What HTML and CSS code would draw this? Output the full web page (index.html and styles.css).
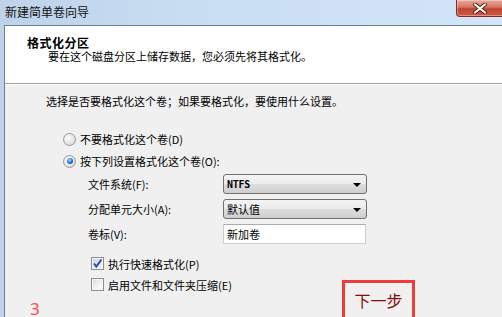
FILE: index.html
```html
<!DOCTYPE html>
<html lang="zh-CN">
<head>
<meta charset="utf-8">
<title>新建简单卷向导</title>
<link rel="stylesheet" href="styles.css">
</head>
<body>
<div class="window">
  <div class="titlebar">
    <span class="title">新建简单卷向导</span>
    <div class="close">
      <svg width="18" height="11" viewBox="0 0 18 11">
        <path d="M4 1.5 L14 9.5 M14 1.5 L4 9.5" stroke="#5a1a12" stroke-width="4" stroke-linecap="round"/>
        <path d="M4 1.5 L14 9.5 M14 1.5 L4 9.5" stroke="#ffffff" stroke-width="2.2" stroke-linecap="round"/>
      </svg>
    </div>
  </div>
  <div class="frame">
    <div class="client">
      <div class="header">
        <div class="h-title">格式化分区</div>
        <div class="h-sub">要在这个磁盘分区上储存数据，您必须先将其格式化。</div>
      </div>
      <div class="content">
        <div class="intro">选择是否要格式化这个卷；如果要格式化，要使用什么设置。</div>
        <div class="radio-row"><span class="radio"></span><span>不要格式化这个卷(D)</span></div>
        <div class="radio-row"><span class="radio checked"></span><span>按下列设置格式化这个卷(O):</span></div>
        <div class="form">
          <div class="f-row"><span class="f-label">文件系统(F):</span><div class="select"><span class="sel-text mono">NTFS</span><span class="arrow"></span></div></div>
          <div class="f-row"><span class="f-label">分配单元大小(A):</span><div class="select"><span class="sel-text">默认值</span><span class="arrow"></span></div></div>
          <div class="f-row"><span class="f-label">卷标(V):</span><div class="input">新加卷</div></div>
        </div>
        <div class="checks">
          <div class="check-row"><span class="check checked">
            <svg width="11" height="11" viewBox="0 0 11 11"><path d="M2 5.5 L4.3 8.5 L9.5 1.5" fill="none" stroke="#2b4fa8" stroke-width="2"/></svg>
          </span><span>执行快速格式化(P)</span></div>
          <div class="check-row"><span class="check"></span><span>启用文件和文件夹压缩(E)</span></div>
        </div>
        <div class="anno-num">3</div>
        <div class="anno-box">下一步</div>
      </div>
    </div>
  </div>
</div>
</body>
</html>
```
FILE: styles.css
```css
html, body {
  margin: 0;
  padding: 0;
  overflow: hidden;
}
body {
  width: 502px;
  height: 317px;
  font-family: "Noto Sans CJK SC", "Noto Sans", sans-serif;
  font-size: 11px;
  color: #000;
}
.window {
  width: 502px;
  height: 317px;
  display: flex;
  flex-direction: column;
  background: linear-gradient(to right, #bed2e9 0%, #c9ddf3 40%, #d3e5f8 100%);
}
.titlebar {
  height: 25px;
  display: flex;
  align-items: center;
  padding-left: 5px;
  flex-shrink: 0;
}
.title {
  font-size: 12px;
  line-height: 14px;
  margin-top: -1px;
  color: #111;
}
.close {
  margin-left: auto;
  align-self: flex-start;
  width: 48px;
  height: 16px;
  margin-right: -4px;
  border: 1px solid #7a2f24;
  border-top: none;
  border-radius: 0 0 0 4px;
  background: linear-gradient(#e9a99b 0%, #d47563 45%, #c0432f 55%, #cf5c43 100%);
  display: flex;
  align-items: center;
  justify-content: center;
  box-shadow: inset 0 0 0 1px rgba(255,255,255,0.35);
}
.close svg { margin-right: 2px; }
.frame {
  flex: 1;
  display: flex;
  padding-left: 4px;
}
.client {
  flex: 1;
  display: flex;
  flex-direction: column;
  background: #f0f0f0;
  border-left: 1px solid #6f7e92;
  border-top: 1px solid #6f7e92;
  position: relative;
}
.header {
  background: #fff;
  height: 58px;
  border-bottom: 1px solid #a0a0a0;
  padding-top: 10px;
  box-sizing: border-box;
  box-shadow: 0 1px 0 #fff;
}
.h-title {
  font-weight: bold;
  font-size: 12px;
  line-height: 14px;
  padding-left: 22px;
  letter-spacing: 0.5px;
}
.h-sub {
  line-height: 13px;
  padding-left: 43px;
}
.content {
  flex: 1;
  padding-top: 10px;
  padding-left: 41px;
}
.intro {
  line-height: 14px;
  margin-bottom: 20px;
}
.radio-row {
  height: 22px;
  display: flex;
  align-items: center;
  padding-left: 17px;
  gap: 4px;
}
.radio {
  width: 11px;
  height: 11px;
  border-radius: 50%;
  border: 1px solid #9a9a9a;
  background: radial-gradient(circle at 40% 35%, #fdfdfd 0%, #e4e4e4 60%, #cfcfcf 100%);
  position: relative;
}
.radio.checked::after {
  content: "";
  position: absolute;
  left: 2.5px;
  top: 2.5px;
  width: 6px;
  height: 6px;
  border-radius: 50%;
  background: radial-gradient(circle at 40% 35%, #a9dcff 0%, #1d6fcf 55%, #103f80 100%);
}
.form {
  margin-top: 2px;
  padding-left: 42px;
  display: flex;
  flex-direction: column;
  gap: 5px;
}
.f-row {
  height: 20px;
  display: flex;
  align-items: center;
}
.f-label {
  width: 135px;
}
.select {
  width: 144px;
  height: 20px;
  box-sizing: border-box;
  border: 1px solid #707070;
  border-radius: 3px;
  background: linear-gradient(#f4f4f4 0%, #ebebeb 50%, #dddddd 51%, #cfcfcf 100%);
  display: flex;
  align-items: center;
  padding-left: 3px;
  padding-right: 5px;
}
.sel-text { flex: 1; }
.mono {
  font-family: "DejaVu Sans Mono", "Liberation Mono", monospace;
  font-weight: bold;
  font-size: 10px;
  letter-spacing: -0.3px;
}
.arrow {
  width: 0;
  height: 0;
  border-left: 4px solid transparent;
  border-right: 4px solid transparent;
  border-top: 4px solid #000;
  margin-top: 1px;
}
.input {
  width: 143px;
  height: 20px;
  box-sizing: border-box;
  border: 1px solid #c8d0dc;
  border-top-color: #abadb3;
  background: #fff;
  display: flex;
  align-items: center;
  padding-left: 3px;
}
.checks {
  margin-top: 9px;
  padding-left: 45px;
}
.check-row {
  height: 21px;
  display: flex;
  align-items: center;
  gap: 4px;
}
.check {
  width: 11px;
  height: 11px;
  border: 1px solid #8e8f8f;
  background: linear-gradient(135deg, #dcdcdc 0%, #f4f4f4 60%, #ffffff 100%);
  box-shadow: inset 0 0 0 1px #f4f4f4;
  display: flex;
  align-items: center;
  justify-content: center;
}
.check.checked {
  background: linear-gradient(135deg, #c9d3e3 0%, #e8eef7 70%, #f6f8fb 100%);
}
.anno-num {
  position: absolute;
  left: 25px;
  top: 273px;
  font-family: "Noto Sans", "Liberation Sans", sans-serif;
  font-size: 17px;
  line-height: 20px;
  color: #ff4a4a;
}
.anno-box {
  position: absolute;
  left: 337px;
  top: 254px;
  width: 67px;
  height: 40px;
  border: 3px solid #ef3b3b;
  color: #8a0a0a;
  font-size: 16px;
  line-height: 34px;
  text-align: center;
  box-sizing: content-box;
}
```
